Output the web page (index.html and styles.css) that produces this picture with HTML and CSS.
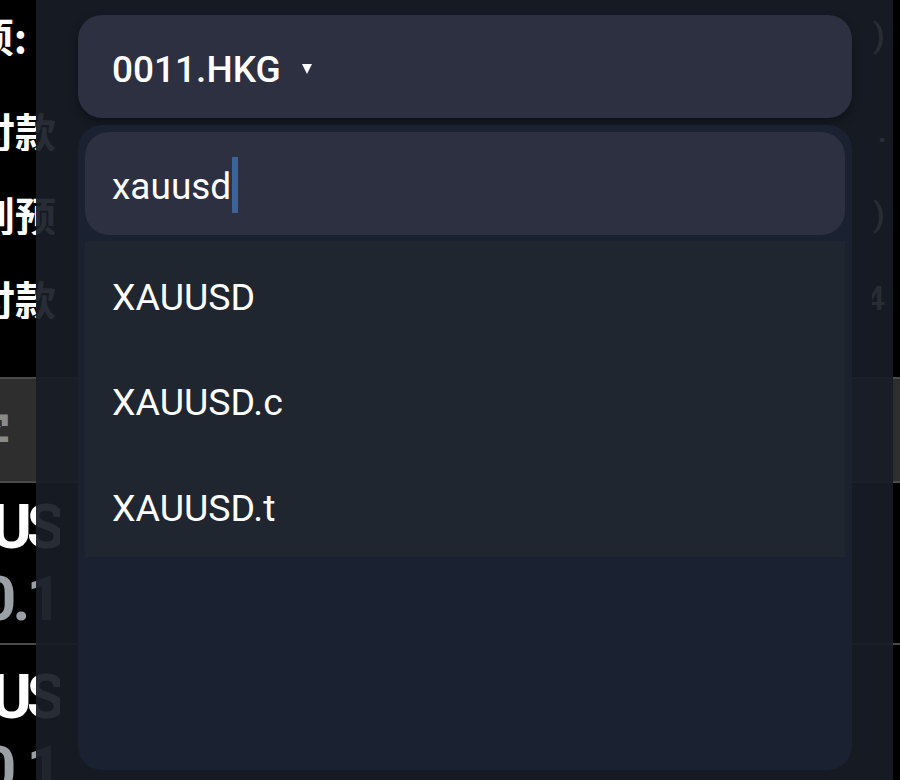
FILE: index.html
```
<!DOCTYPE html>
<html lang="zh">
<head>
<meta charset="utf-8">
<title>Symbol picker</title>
<link rel="stylesheet" href="styles.css">
</head>
<body>
<div class="screen">
  <div class="bg">
    <div class="row r1"><div class="lbl short">交易品种选项:</div><div class="val">(0)</div></div>
    <div class="row r2"><div class="lbl">可用付款</div><div class="val dot">0.</div></div>
    <div class="row r3"><div class="lbl">已用到预</div><div class="val">(0)</div></div>
    <div class="row r4"><div class="lbl">冻结付款</div><div class="val">14</div></div>
    <div class="band"><div class="lbl grey">文字</div></div>
    <div class="pos">
      <div class="lbl big">XAUUS</div>
      <div class="lbl num">10.1</div>
    </div>
    <div class="pos last">
      <div class="lbl big">XAUUS</div>
      <div class="lbl num">10.1</div>
    </div>
  </div>

  <div class="overlay">
    <button class="select">0011.HKG <span class="caret"></span></button>
    <div class="menu">
      <div class="search">xauusd<span class="cursor"></span></div>
      <ul class="items">
        <li>XAUUSD</li>
        <li>XAUUSD.c</li>
        <li>XAUUSD.t</li>
      </ul>
    </div>
  </div>
</div>
</body>
</html>
```

FILE: styles.css
```
html, body {
  margin: 0;
  padding: 0;
  background: #000;
}
.screen {
  position: relative;
  width: 900px;
  height: 780px;
  overflow: hidden;
  background: #000;
  font-family: Roboto, "Noto Sans", "Noto Sans CJK SC", sans-serif;
  color: #fff;
}

/* background page */
.bg {
  display: flex;
  flex-direction: column;
}
.row {
  display: flex;
  justify-content: space-between;
  align-items: center;
  height: 84px;
}
.r1 { height: 70px; margin-bottom: 18px; }
.r4 { margin-bottom: 37px; }
.lbl {
  width: 56px;
  display: flex;
  justify-content: flex-end;
  overflow: hidden;
  white-space: nowrap;
  font-family: "Noto Sans CJK SC", sans-serif;
  font-weight: 700;
  font-size: 41px;
  line-height: 1;
}
.lbl.short { width: 27px; }
.val {
  width: 13px;
  padding-right: 15px;
  display: flex;
  justify-content: flex-end;
  overflow: hidden;
  white-space: nowrap;
  font-size: 34px;
  font-weight: 500;
  color: #fff;
}
.val.dot { width: 8px; padding-right: 13px; }
.band {
  height: 102px;
  border-top: 2px solid #4a4a4a;
  border-bottom: 2px solid #4a4a4a;
  background: #2e2e2e;
  display: flex;
  align-items: center;
}
.grey {
  color: #8a8a8a;
  font-size: 48px;
  width: 11px;
}
.pos {
  height: 160px;
  border-bottom: 2px solid #4a4a4a;
  display: flex;
  flex-direction: column;
  justify-content: center;
  gap: 6px;
}
.pos.last { border-bottom: 0; padding-top: 8px; }
.big {
  font-family: Roboto, sans-serif;
  font-size: 62px;
  font-weight: 700;
  letter-spacing: -5px;
  line-height: 66px;
  width: 60px;
}
.num {
  font-family: Roboto, sans-serif;
  font-size: 62px;
  font-weight: 700;
  color: #9aa0a6;
  letter-spacing: -4px;
  line-height: 66px;
  width: 58px;
}

/* overlay */
.overlay {
  position: absolute;
  left: 36px;
  top: 0;
  width: 857px;
  height: 780px;
  box-sizing: border-box;
  padding: 15px 41px 0 42px;
  background: rgba(24, 28, 38, 0.93);
  display: flex;
  flex-direction: column;
}
.select {
  display: flex;
  align-items: center;
  gap: 21px;
  height: 103px;
  border: 0;
  border-radius: 24px;
  background: #2c3040;
  box-shadow: 0 4px 8px rgba(0, 0, 0, 0.35);
  padding: 5px 0 0 34px;
  font-family: Roboto, sans-serif;
  font-size: 37px;
  font-weight: 500;
  color: #fff;
  text-align: left;
}
.caret {
  width: 0;
  height: 0;
  border-left: 5.5px solid transparent;
  border-right: 5.5px solid transparent;
  border-top: 10px solid #fff;
  margin-top: 0;
}
.menu {
  margin-top: 7px;
  height: 645px;
  box-sizing: border-box;
  padding: 7px;
  background: #1a2130;
  border-radius: 24px;
  display: flex;
  flex-direction: column;
}
.search {
  height: 103px;
  box-sizing: border-box;
  border-radius: 24px;
  background: #2c3040;
  padding: 6px 0 0 27px;
  display: flex;
  align-items: center;
  font-size: 37px;
  font-weight: 400;
  color: #fff;
}
.cursor {
  width: 6px;
  height: 56px;
  margin-left: 1px;
  margin-top: -4px;
  background: #3d6395;
}
.items {
  list-style: none;
  margin: 6px 0 0;
  padding: 0;
  background: #1f2630;
}
.items li {
  height: 105.3px;
  box-sizing: border-box;
  padding: 7px 0 0 27px;
  display: flex;
  align-items: center;
  font-size: 37.5px;
  font-weight: 400;
  color: #fff;
}
```
